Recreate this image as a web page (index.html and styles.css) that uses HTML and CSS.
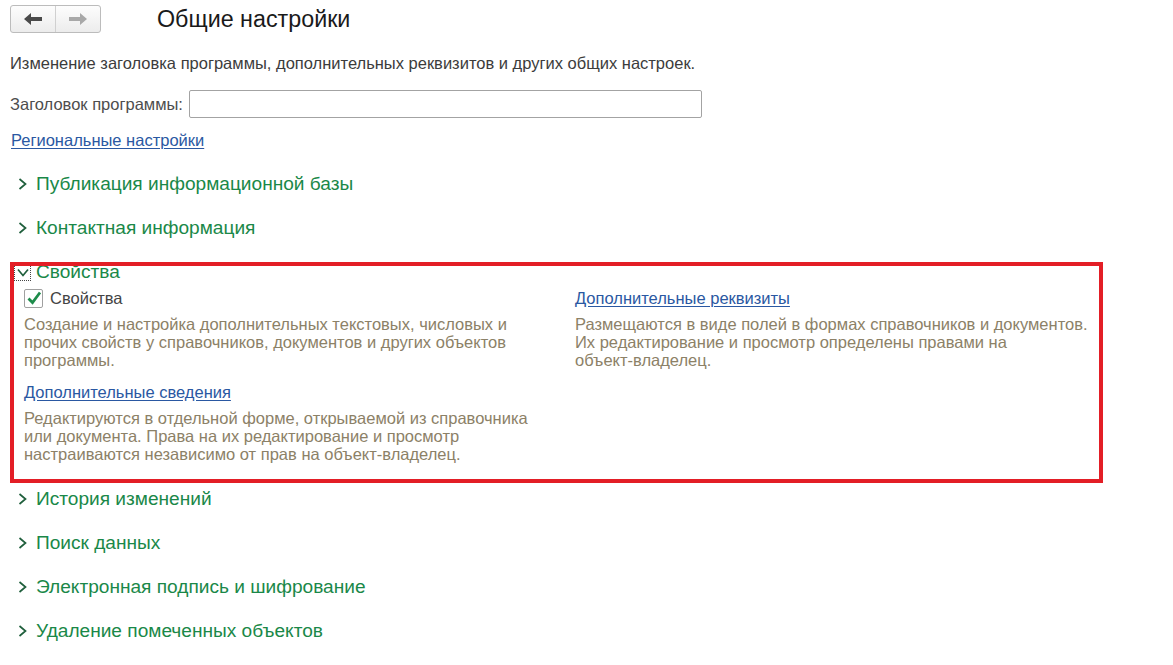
FILE: index.html
```html
<!DOCTYPE html>
<html lang="ru">
<head>
<meta charset="utf-8">
<title>Общие настройки</title>
<link rel="stylesheet" href="styles.css">
</head>
<body>
<div class="page">
  <header class="topbar">
    <div class="nav">
      <button class="nav-btn" type="button" aria-label="Назад">
        <svg width="18" height="12" viewBox="0 0 18 12"><path d="M0 6 L7 0 V4 H18 V8 H7 V12 Z" fill="#4a4a4a"/></svg>
      </button>
      <button class="nav-btn" type="button" aria-label="Вперёд">
        <svg width="18" height="12" viewBox="0 0 18 12"><path d="M18 6 L11 0 V4 H0 V8 H11 V12 Z" fill="#a8a8a8"/></svg>
      </button>
    </div>
    <h1 class="title">Общие настройки</h1>
  </header>

  <p class="intro">Изменение заголовка программы, дополнительных реквизитов и других общих настроек.</p>

  <div class="field">
    <label class="field-label" for="apptitle">Заголовок программы:</label>
    <input class="field-input" id="apptitle" type="text">
  </div>

  <a class="link region-link" href="#">Региональные настройки</a>

  <div class="groups">
    <div class="group">
      <div class="group-head">
        <span class="chev"><svg width="9" height="12" viewBox="0 0 9 12"><path d="M1.5 1 L7.5 6 L1.5 11" fill="none" stroke="#1f5f3c" stroke-width="1.7"/></svg></span>
        <span class="group-title">Публикация информационной базы</span>
      </div>
    </div>
    <div class="group">
      <div class="group-head">
        <span class="chev"><svg width="9" height="12" viewBox="0 0 9 12"><path d="M1.5 1 L7.5 6 L1.5 11" fill="none" stroke="#1f5f3c" stroke-width="1.7"/></svg></span>
        <span class="group-title">Контактная информация</span>
      </div>
    </div>
    <div class="group expanded">
      <div class="group-head">
        <span class="chev focus"><svg width="12" height="9" viewBox="0 0 12 9"><path d="M1 1.5 L6 7.5 L11 1.5" fill="none" stroke="#1f5f3c" stroke-width="1.7"/></svg></span>
        <span class="group-title">Свойства</span>
      </div>
      <div class="group-body">
        <div class="col">
          <label class="check-row">
            <span class="checkbox"><svg width="16" height="16" viewBox="0 0 16 16"><path d="M2.5 8.5 L6.5 12.5 L14 2.5" fill="none" stroke="#1e8c4b" stroke-width="2.8"/></svg></span>
            <span class="check-label">Свойства</span>
          </label>
          <p class="note">Создание и настройка дополнительных текстовых, числовых и прочих свойств у справочников, документов и других объектов программы.</p>
          <a class="link sub-link" href="#">Дополнительные сведения</a>
          <p class="note note-tight">Редактируются в отдельной форме, открываемой из справочника или документа. Права на их редактирование и просмотр настраиваются независимо от прав на объект-владелец.</p>
        </div>
        <div class="col col-right">
          <div class="link-row"><a class="link" href="#">Дополнительные реквизиты</a></div>
          <p class="note">Размещаются в виде полей в формах справочников и документов. Их редактирование и просмотр определены правами на <span class="nobr">объект-владелец.</span></p>
        </div>
      </div>
      <div class="highlight" aria-hidden="true"></div>
    </div>
    <div class="group">
      <div class="group-head">
        <span class="chev"><svg width="9" height="12" viewBox="0 0 9 12"><path d="M1.5 1 L7.5 6 L1.5 11" fill="none" stroke="#1f5f3c" stroke-width="1.7"/></svg></span>
        <span class="group-title">История изменений</span>
      </div>
    </div>
    <div class="group">
      <div class="group-head">
        <span class="chev"><svg width="9" height="12" viewBox="0 0 9 12"><path d="M1.5 1 L7.5 6 L1.5 11" fill="none" stroke="#1f5f3c" stroke-width="1.7"/></svg></span>
        <span class="group-title">Поиск данных</span>
      </div>
    </div>
    <div class="group">
      <div class="group-head">
        <span class="chev"><svg width="9" height="12" viewBox="0 0 9 12"><path d="M1.5 1 L7.5 6 L1.5 11" fill="none" stroke="#1f5f3c" stroke-width="1.7"/></svg></span>
        <span class="group-title">Электронная подпись и шифрование</span>
      </div>
    </div>
    <div class="group">
      <div class="group-head">
        <span class="chev"><svg width="9" height="12" viewBox="0 0 9 12"><path d="M1.5 1 L7.5 6 L1.5 11" fill="none" stroke="#1f5f3c" stroke-width="1.7"/></svg></span>
        <span class="group-title">Удаление помеченных объектов</span>
      </div>
    </div>
  </div>
</div>
</body>
</html>
```

FILE: styles.css
```css
* { box-sizing: border-box; }
html, body { margin: 0; background: #fff; }
body {
  font-family: "Liberation Sans", Arial, sans-serif;
  color: #4a4a4a;
  font-size: 16.5px;
}
.page {
  padding: 5px 10px 0 10px;
  width: 1173px;
  height: 665px;
  overflow: hidden;
}
.topbar {
  display: flex;
  align-items: center;
  height: 28px;
}
.nav {
  display: flex;
  width: 91px;
  height: 28px;
  border: 1px solid #bcbcbc;
  border-radius: 3px;
  background: linear-gradient(#fdfdfd, #ececec);
  overflow: hidden;
}
.nav-btn {
  flex: 1;
  border: 0;
  background: transparent;
  display: flex;
  align-items: center;
  justify-content: center;
  padding: 0;
}
.nav-btn + .nav-btn { border-left: 1px solid #d0d0d0; }
.title {
  margin: 0 0 0 56px;
  font-size: 23.3px;
  font-weight: normal;
  color: #1a1a1a;
  line-height: 28px;
}
.intro {
  margin: 21px 0 0 0;
  line-height: 18px;
  color: #3c3c3c;
}
.field {
  display: flex;
  align-items: center;
  margin-top: 18px;
  height: 28px;
}
.field-label {
  color: #4d4d4d;
  margin-right: 6px;
}
.field-input {
  width: 513px;
  height: 28px;
  border: 1px solid #a3a3a3;
  border-radius: 2px;
  background: #fff;
  font: inherit;
  padding: 0 4px;
}
.link {
  color: #2a58a2;
  text-decoration: underline;
  text-underline-offset: 2px;
}
.region-link {
  display: block;
  margin: 13px 0 0 1px;
  line-height: 18px;
  width: max-content;
}
.groups {
  display: flex;
  flex-direction: column;
  gap: 20px;
  margin-top: 23px;
}
.group { position: relative; }
.group-head {
  display: flex;
  align-items: center;
  height: 24px;
  padding-left: 4px;
}
.chev {
  width: 17px;
  height: 17px;
  display: flex;
  align-items: center;
  justify-content: center;
  margin-right: 5px;
}
.chev.focus { outline: 1px dotted #444; outline-offset: -1px; }
.group-title {
  font-size: 19.1px;
  color: #1a8848;
  line-height: 24px;
}
.group-body {
  display: grid;
  grid-template-columns: 510px 520px;
  column-gap: 41px;
  margin-top: 4px;
  padding: 0 0 4px 14px;
}
.check-row {
  display: flex;
  align-items: center;
  height: 20px;
  color: #444;
}
.checkbox {
  width: 19px;
  height: 19px;
  border: 1px solid #a0a0a0;
  border-radius: 2px;
  background: #fff;
  display: flex;
  align-items: center;
  justify-content: center;
  margin-right: 7px;
}
.note {
  margin: 7px 0 0 0;
  line-height: 18px;
  color: #8c8167;
}
.nobr { white-space: nowrap; }
.note-tight { margin-top: 8px; }
.sub-link {
  display: block;
  width: max-content;
  margin-top: 14px;
  line-height: 18px;
}
.link-row {
  height: 20px;
  display: flex;
  align-items: center;
}
.highlight {
  position: absolute;
  left: 0;
  top: 2px;
  width: 1093px;
  height: 221px;
  border: 4px solid #e31e26;
  pointer-events: none;
}
```
